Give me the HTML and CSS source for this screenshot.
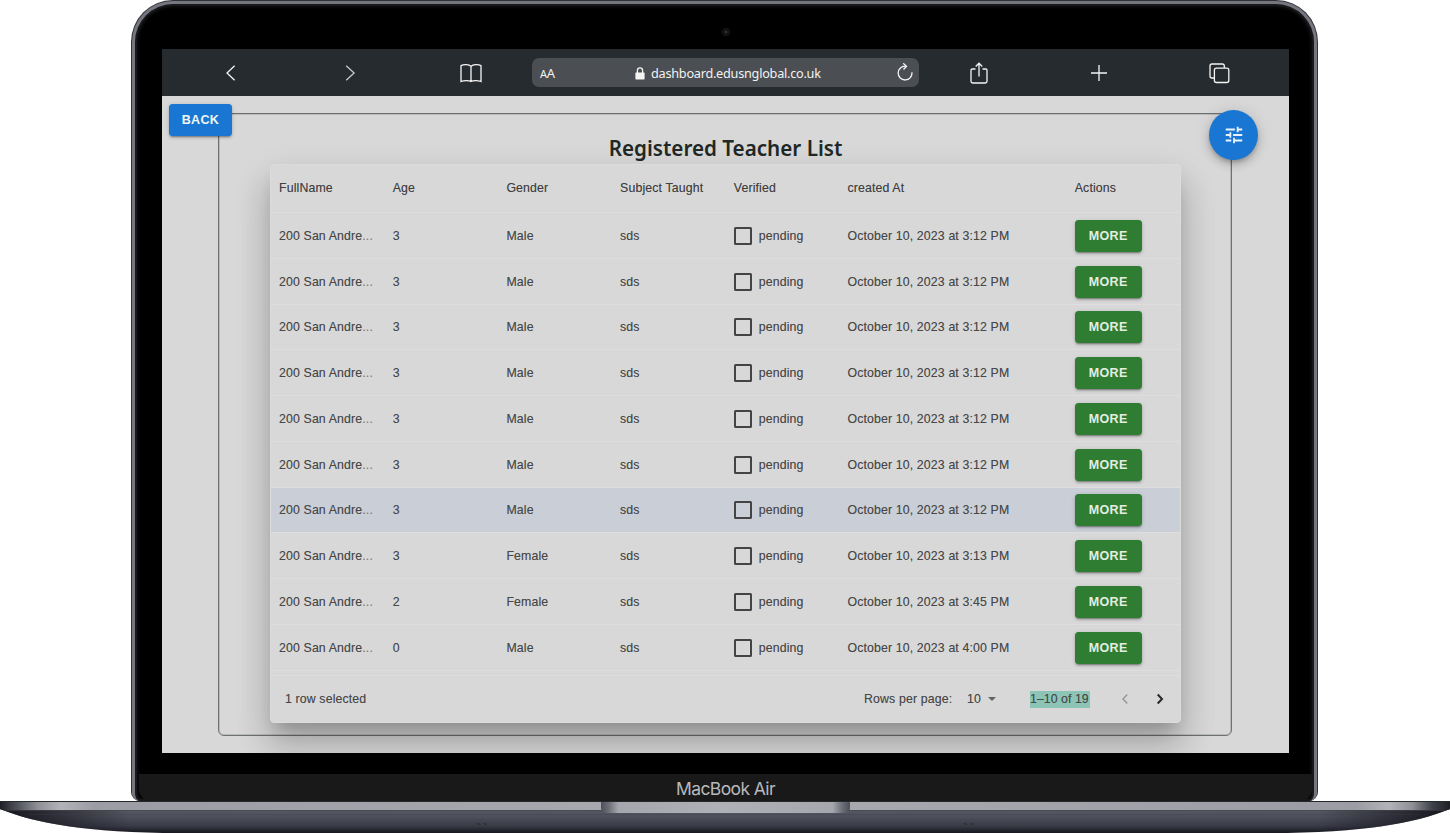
FILE: index.html
```html
<!DOCTYPE html>
<html lang="en">
<head>
<meta charset="utf-8">
<title>Registered Teacher List</title>
<link rel="stylesheet" href="styles.css">
</head>
<body>
<div class="laptop">
  <div class="lid">
    <div class="bezel">
      <div class="camera-bar"><span class="camera"></span></div>
      <div class="screen">
        <nav class="toolbar">
          <span class="tool"><svg width="24" height="24" viewBox="0 0 24 24"><path d="M15.6 4.8 8 12l7.6 7.2" stroke-width="1.7"/></svg></span>
          <span class="tool"><svg width="24" height="24" viewBox="0 0 24 24"><path class="dim" d="m8.2 4.8 7.9 7.2-7.9 7.2"/></svg></span>
          <span class="tool tool-book"><svg width="24" height="24" viewBox="0 0 24 24"><path d="M12 5.200C10 3.400 5 3 2 4.600v15.900c3-1.200 8-1.200 10 0 2-1.200 7-1.200 10 0V4.600C19 3 14 3.400 12 5.200zM12 5.200v15.300"/></svg></span>
          <div class="address">
            <span class="aa"><small>A</small>A</span>
            <span class="url"><svg class="lock" width="10" height="13" viewBox="0 0 10 13"><path class="solid" d="M1 5.600h8q.6 0 .6.600v5.600q0 .7-.7.700H1.100q-.7 0-.7-.7V6.200q0-.6.600-.6z"/><path d="M2.400 6V3.500a2.600 2.600 0 0 1 5.200 0V6"/></svg>dashboard.edusnglobal.co.uk</span>
            <svg class="reload" width="18" height="20" viewBox="0 0 18 20"><path d="M9.600 3.200A6.900 6.900 0 1 0 15.900 9.300M7.200.300l3.300 2.900-3 3.300"/></svg>
          </div>
          <span class="tool"><svg width="24" height="24" viewBox="0 0 24 24"><path d="M8.500 8H5.200Q4 8 4 9.200v11.100q0 1.700 1.700 1.700h12.600q1.700 0 1.700-1.700V9.200Q20 8 18.800 8h-3.300M12 15.500V2.400M8.700 5.500 12 2.200l3.300 3.300"/></svg></span>
          <span class="tool tool-wide"><svg width="24" height="24" viewBox="0 0 24 24"><path d="M12 4v16M4 12h16"/></svg></span>
          <span class="tool tool-wide"><svg width="24" height="24" viewBox="0 0 24 24"><path d="M7.200 17H5q-2 0-2-2V5q0-2 2-2h10.300q2 0 2 2v2.100"/><rect x="7.400" y="7.200" width="14.400" height="14.300" rx="2"/></svg></span>
        </nav>
        <main class="page">
          <button class="btn btn-back">BACK</button>
          <button class="fab" aria-label="Filters"><svg width="22" height="22" viewBox="0 0 24 24"><path d="M3 17v2h6v-2H3zM3 5v2h10V5H3zm10 16v-2h8v-2h-8v-2h-2v6h2zM7 9v2H3v2h4v2h2V9H7zm14 4v-2H11v2h10zm-6-4h2V7h4V5h-4V3h-2v6z"/></svg></button>
          <section class="frame">
            <h1 class="title">Registered Teacher List</h1>
            <div class="grid">
              <div class="row head"><span>FullName</span><span>Age</span><span>Gender</span><span>Subject Taught</span><span>Verified</span><span>created At</span><span>Actions</span></div>
              <div class="row"><span>200 San Andre<i>...</i></span><span>3</span><span>Male</span><span>sds</span><span class="check"><b></b>pending</span><span>October 10, 2023 at 3:12 PM</span><span><button class="btn btn-more">MORE</button></span></div>
              <div class="row"><span>200 San Andre<i>...</i></span><span>3</span><span>Male</span><span>sds</span><span class="check"><b></b>pending</span><span>October 10, 2023 at 3:12 PM</span><span><button class="btn btn-more">MORE</button></span></div>
              <div class="row"><span>200 San Andre<i>...</i></span><span>3</span><span>Male</span><span>sds</span><span class="check"><b></b>pending</span><span>October 10, 2023 at 3:12 PM</span><span><button class="btn btn-more">MORE</button></span></div>
              <div class="row"><span>200 San Andre<i>...</i></span><span>3</span><span>Male</span><span>sds</span><span class="check"><b></b>pending</span><span>October 10, 2023 at 3:12 PM</span><span><button class="btn btn-more">MORE</button></span></div>
              <div class="row"><span>200 San Andre<i>...</i></span><span>3</span><span>Male</span><span>sds</span><span class="check"><b></b>pending</span><span>October 10, 2023 at 3:12 PM</span><span><button class="btn btn-more">MORE</button></span></div>
              <div class="row"><span>200 San Andre<i>...</i></span><span>3</span><span>Male</span><span>sds</span><span class="check"><b></b>pending</span><span>October 10, 2023 at 3:12 PM</span><span><button class="btn btn-more">MORE</button></span></div>
              <div class="row selected"><span>200 San Andre<i>...</i></span><span>3</span><span>Male</span><span>sds</span><span class="check"><b></b>pending</span><span>October 10, 2023 at 3:12 PM</span><span><button class="btn btn-more">MORE</button></span></div>
              <div class="row"><span>200 San Andre<i>...</i></span><span>3</span><span>Female</span><span>sds</span><span class="check"><b></b>pending</span><span>October 10, 2023 at 3:13 PM</span><span><button class="btn btn-more">MORE</button></span></div>
              <div class="row"><span>200 San Andre<i>...</i></span><span>2</span><span>Female</span><span>sds</span><span class="check"><b></b>pending</span><span>October 10, 2023 at 3:45 PM</span><span><button class="btn btn-more">MORE</button></span></div>
              <div class="row"><span>200 San Andre<i>...</i></span><span>0</span><span>Male</span><span>sds</span><span class="check"><b></b>pending</span><span>October 10, 2023 at 4:00 PM</span><span><button class="btn btn-more">MORE</button></span></div>
              <footer class="foot">
                <span class="count">1 row selected</span>
                <span class="per-page">Rows per page:</span>
                <span class="size">10<svg width="8" height="4" viewBox="0 0 8 4"><path d="M0 0h8L4 4z"/></svg></span>
                <span class="range">1–10 of 19</span>
                <svg class="prev" width="8" height="12" viewBox="0 0 8 12"><path d="M6.300 1.500 2 6l4.300 4.500"/></svg>
                <svg class="next" width="8" height="12" viewBox="0 0 8 12"><path d="M1.700 1.500 6 6l-4.300 4.500"/></svg>
              </footer>
            </div>
          </section>
        </main>
      </div>
      <div class="chin">MacBook Air</div>
    </div>
  </div>
  <svg class="base" width="1450" height="32" viewBox="0 0 1450 32">
    <defs>
      <linearGradient id="deck" x2="1"><stop offset="0" stop-color="#1e1f25"/><stop offset=".012" stop-color="#50525a"/><stop offset=".026" stop-color="#8f9096"/><stop offset=".042" stop-color="#b2b3b8"/><stop offset=".065" stop-color="#9c9da4"/><stop offset=".5" stop-color="#aaabb1"/><stop offset=".935" stop-color="#9c9da4"/><stop offset=".958" stop-color="#b2b3b8"/><stop offset=".974" stop-color="#8f9096"/><stop offset=".988" stop-color="#3e4048"/><stop offset="1" stop-color="#1e1f25"/></linearGradient>
      <linearGradient id="under" x2="0" y2="1"><stop offset="0" stop-color="#575962"/><stop offset=".35" stop-color="#4c4e5a"/><stop offset=".7" stop-color="#393b47"/><stop offset="1" stop-color="#17161f"/></linearGradient>
      <linearGradient id="tips" x2="1"><stop offset="0" stop-color="#15151c"/><stop offset=".09" stop-color="#15151c" stop-opacity="0"/><stop offset=".91" stop-color="#15151c" stop-opacity="0"/><stop offset="1" stop-color="#15151c"/></linearGradient>
      <linearGradient id="notch" x2="1"><stop offset="0" stop-color="#4c4e59"/><stop offset=".03" stop-color="#6b6d76"/><stop offset=".07" stop-color="#a6a7ad"/><stop offset=".5" stop-color="#b0b1b6"/><stop offset=".93" stop-color="#a6a7ad"/><stop offset=".97" stop-color="#6b6d76"/><stop offset="1" stop-color="#4c4e59"/></linearGradient>
      <clipPath id="hull"><path d="M0 0h1450v8c-35 14-86 24-180 24H180C86 32 35 22 0 8z"/></clipPath>
    </defs>
    <g clip-path="url(#hull)">
      <path fill="url(#under)" d="M0 8h1450v24H0z"/>
      <path fill="url(#tips)" d="M0 8h1450v24H0z"/>
      <path fill="url(#deck)" d="M0 0h1450v9H0z"/>
      <path fill="#25272c" d="M0 0h1450v1H0z"/>
      <path fill="#41434c" opacity=".6" d="M0 9h1450v1H0zM30 13.500h1390v.6H30z"/>
      <path fill="url(#notch)" d="M601 1h249v6q0 5-7 5H608q-7 0-7-5z"/>
      <path fill="#20212a" opacity=".5" d="M476 22h3l2 2h-3zM486 22h-3l1 2h3zM963 22h3l2 2h-3zM973 22h-3l1 2h3z"/>
    </g>
  </svg>
</div>
</body>
</html>
```
FILE: styles.css
```css
* { box-sizing: border-box; }
body { margin: 0; background: #fff; overflow: hidden; }

.laptop { width: 1450px; height: 833px; display: flex; flex-direction: column; align-items: center; }
.lid {
  width: 1187px; height: 801px; margin-right: 1px; padding: 1px;
  background: #30323a; border-radius: 42px 42px 9px 9px;
}
.bezel {
  height: 800px; padding: 0 3px 0 5px; background: #000;
  border: 3px solid #75767e; border-bottom: 0; border-radius: 41px 41px 8px 8px;
  box-shadow: inset 0 0 0 2px #17181b, inset 0 0 2px 4px #0c0c0e;
  display: flex; flex-direction: column; align-items: center;
}
.camera-bar { height: 45px; flex: none; padding-top: 24px; }
.camera { display: block; width: 8px; height: 8px; border-radius: 50%; background: radial-gradient(#2f3138 15%, #0b0b0d 35%, #1b1b1e 80%); }

.screen { width: 1127px; height: 704px; flex: none; display: flex; flex-direction: column; overflow: hidden; background: #d8d8d8; }
.toolbar { height: 47px; flex: none; background: #262b2f; display: flex; align-items: center; padding: 0 0 0 9px; }
.tool { width: 119.500px; flex: none; display: flex; justify-content: center; }
.tool-book { width: 122px; }
.tool-wide { width: 120.400px; }
.toolbar svg path, .toolbar svg rect { fill: none; stroke: #f4f4f4; stroke-width: 1.300; }
.toolbar svg path.dim { stroke: #c8cacb; }
.toolbar svg path.solid { fill: #f4f4f4; stroke: none; }
.address {
  width: 387px; height: 29px; flex: none; border-radius: 7px; background: #4b4e53; color: #f2f2f2;
  display: flex; align-items: center; padding: 0 5px 0 8px; font: 13px/28px "Noto Sans", sans-serif;
}
.aa { width: 95px; font-size: 13px; letter-spacing: -.2px; padding-top: 1px; }
.aa small { font-size: 11px; }
.url { flex: 1; display: flex; align-items: center; gap: 6px; font-size: 12.700px; letter-spacing: -.25px; padding-top: 1px; white-space: nowrap; }

.page { position: relative; flex: 1; padding: 17px 57px 17px 56px; font-family: "Liberation Sans", Arial, sans-serif; }
.btn {
  display: block; padding: 0; border: 0; border-radius: 3.500px; color: #f2f6f2;
  font: bold 12.500px/32px "Liberation Sans", Arial, sans-serif; letter-spacing: .35px;
  box-shadow: 0 3px 1px -2px rgba(0,0,0,.2), 0 2px 2px rgba(0,0,0,.14), 0 1px 4px rgba(0,0,0,.16);
}
.btn-back { position: absolute; left: 7px; top: 8px; width: 63px; height: 32px; background: #1976d2; }
.btn-more { width: 67px; height: 32px; background: #2e7d32; color: #e4ede4; }
.fab {
  position: absolute; z-index: 1; left: 1047px; top: 14px; width: 49px; height: 50px; padding: 0; border: 0;
  border-radius: 50%; background: #1976d2; display: flex; align-items: center; justify-content: center;
  box-shadow: 0 3px 4px -1px rgba(0,0,0,.2), 0 5px 9px rgba(0,0,0,.14), 0 1px 16px rgba(0,0,0,.12);
}
.fab path { fill: #eaf2fb; }

.frame { height: 623px; border: 1px solid #6d716f; border-radius: 6px; padding: 0 50px 0 51px; box-shadow: inset 0 0 0 1px #b9bbba; }
.title { margin: 0; height: 50px; padding-top: 18px; text-align: center; color: #212825; font: 600 20.650px/32px "Noto Sans", sans-serif; white-space: nowrap; }
.grid {
  position: relative; height: 559px; border-radius: 4px; background: #d8d8d8; border: 1px solid #dcdcdc;
  color: #484848; font-size: 12.320px; letter-spacing: .14px; text-shadow: 0 0 .6px rgba(72,72,72,.45);
  box-shadow: 0 12px 15px -6px rgba(0,0,0,.17), 0 24px 34px 2px rgba(0,0,0,.14), 0 14px 36px 3px rgba(0,0,0,.1);
}
.row {
  display: grid; grid-template-columns: repeat(5, 113.700px) 227.300px 1fr; align-items: center;
  height: 45.750px; border-bottom: 1px solid #dedede; padding: 1px 0 0 8px; white-space: nowrap;
}
.row.head { height: 48px; padding: 0 0 1px 8px; color: #404040; }
.row.selected { background: #c9ced7; }
.row i { font-style: normal; color: #858585; }
.check { display: flex; align-items: center; gap: 7px; }
.check b { width: 18px; height: 18px; border: 2px solid #444; border-radius: 1.500px; }
.foot { height: 47px; margin-top: 4px; border-top: 1px solid #dedede; display: flex; align-items: center; padding: 1px 16px 0 14px; }
.count { flex: 1; }
.per-page { width: 103px; }
.size { width: 63px; display: flex; align-items: center; gap: 7px; padding-bottom: 1px; }
.size path { fill: #626262; }
.range { width: 60px; line-height: 17px; background: #8cc5b5; margin-right: 31px; white-space: nowrap; letter-spacing: .05px; }
.prev, .next { fill: none; stroke: #999; stroke-width: 1.500; }
.next { stroke: #292929; stroke-width: 2; margin-left: 27px; }

.chin {
  width: 1173px; height: 27px; flex: none; margin-top: 21px; background: #191919; border-radius: 0 0 12px 12px;
  color: #b9b9bd; text-align: center; font: 17.500px/29px Inter, sans-serif; letter-spacing: -.6px;
}
.base { display: block; flex: none; }
```
